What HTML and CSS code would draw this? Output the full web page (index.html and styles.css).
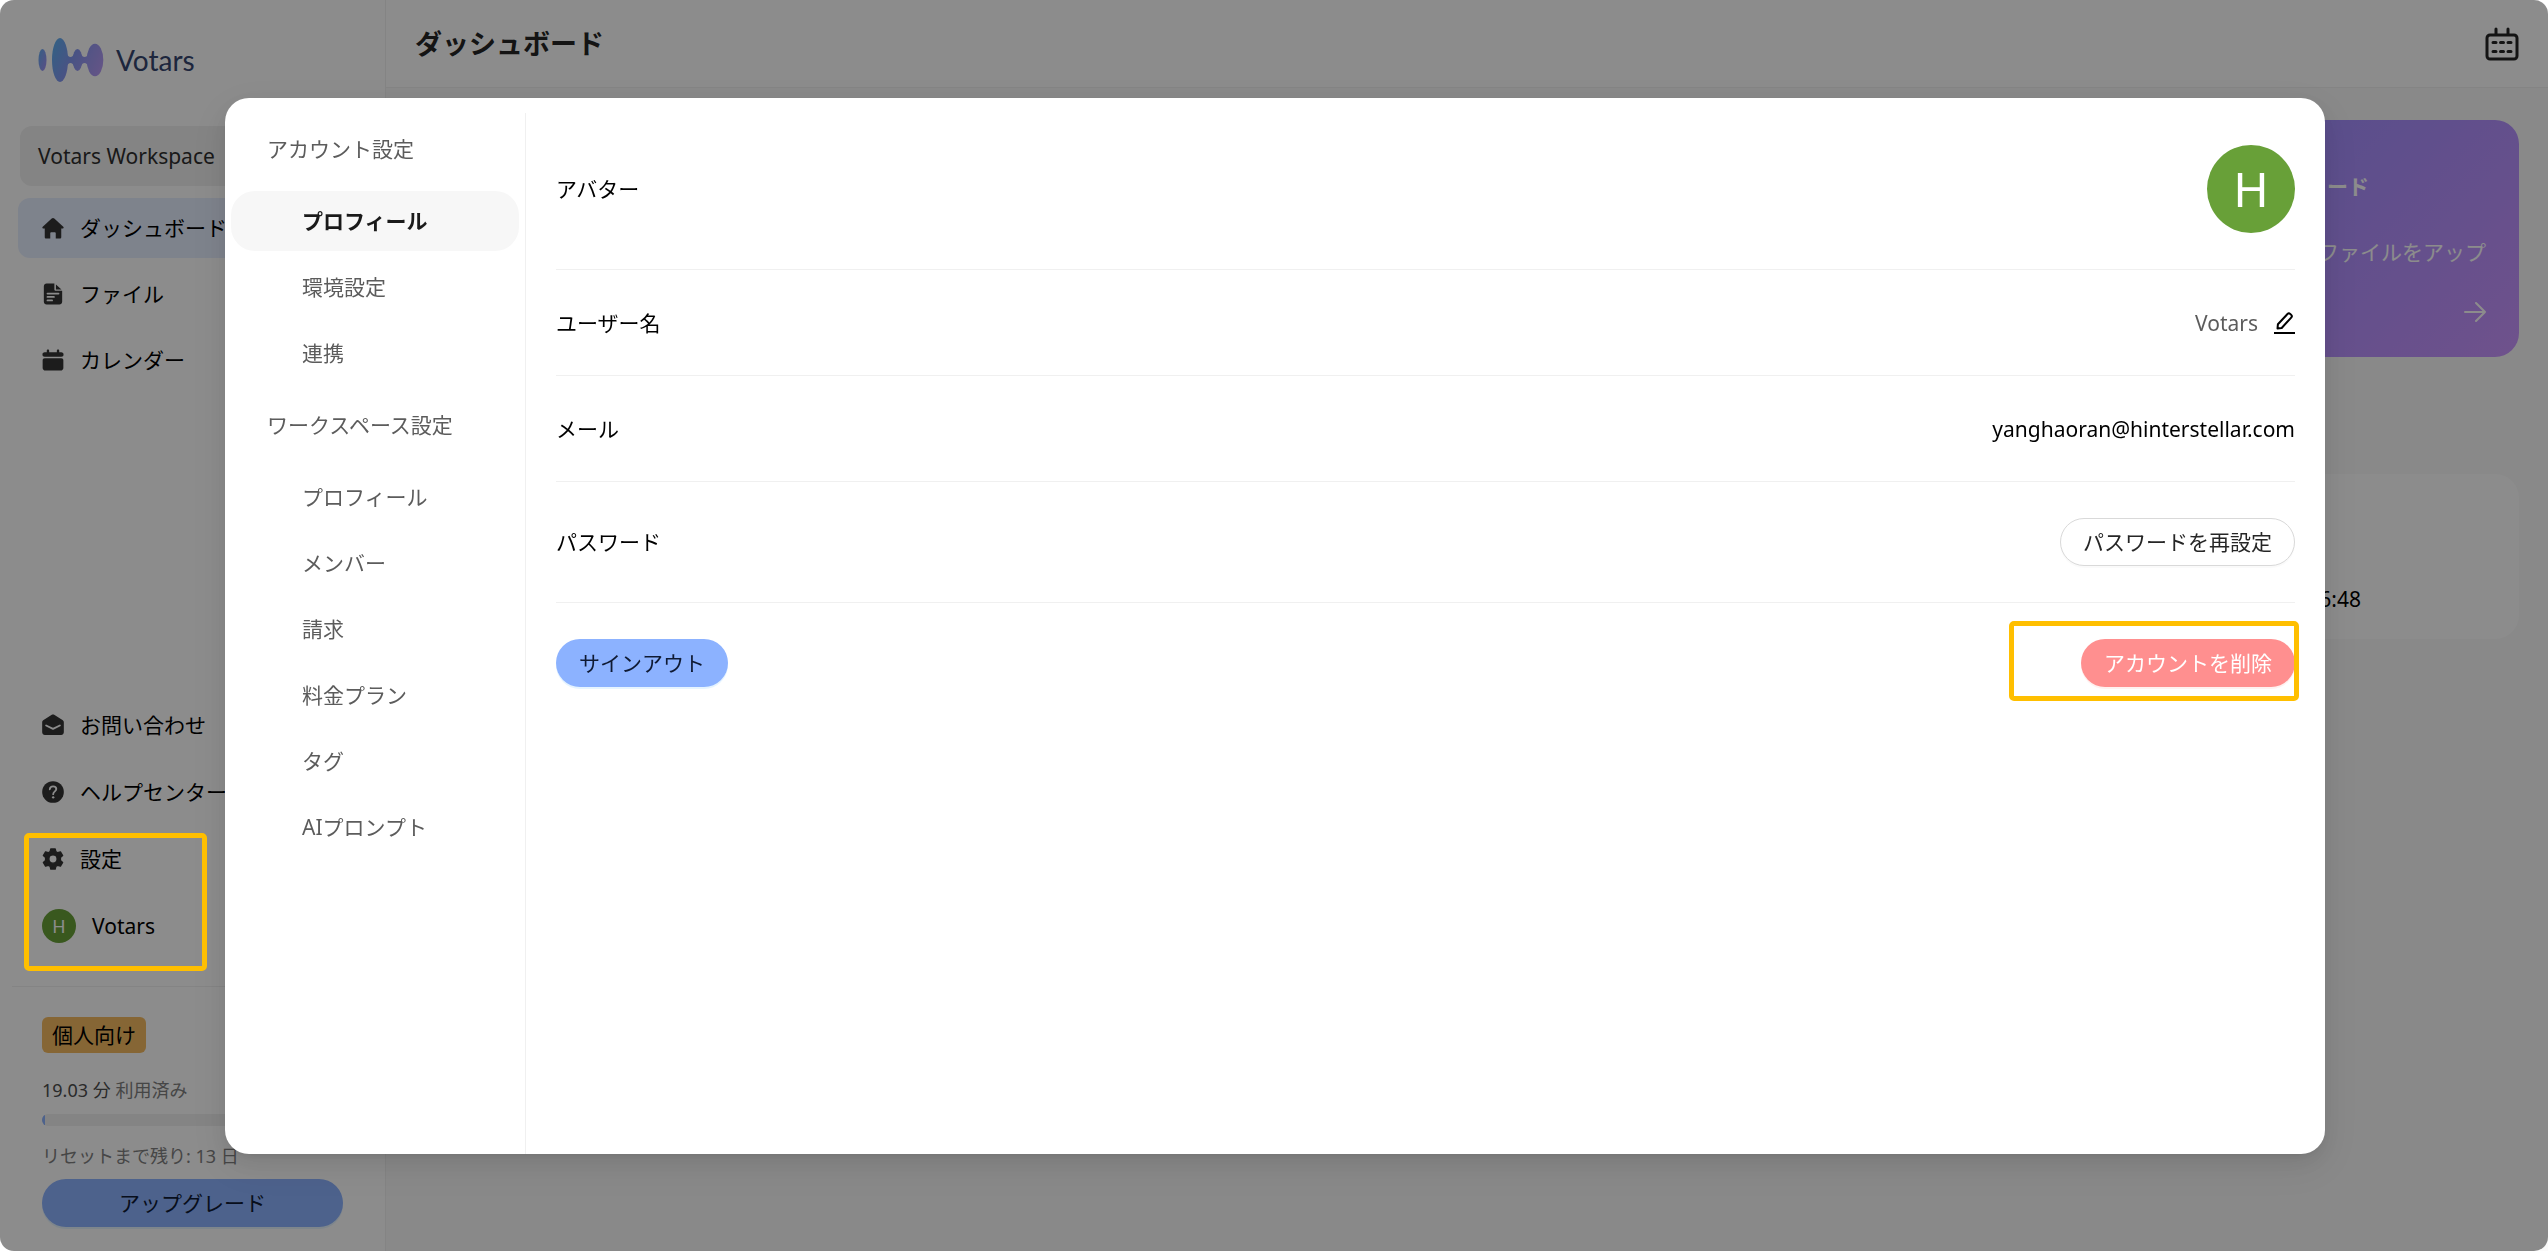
FILE: index.html
```html
<!DOCTYPE html>
<html lang="ja">
<head>
  <meta charset="utf-8">
  <meta name="viewport" content="width=device-width, initial-scale=1">
  <title>Votars</title>
  <link rel="stylesheet" href="styles.css">
</head>
<body>
  <div class="app">
    <aside class="sidebar">
      <a href="#" class="logo">
        <svg width="66" height="44" viewBox="0 0 66 44">
          <defs>
            <linearGradient id="logoMain" gradientUnits="userSpaceOnUse" x1="14" y1="10" x2="66" y2="34">
              <stop offset="0" stop-color="#61aef0"/>
              <stop offset="0.4" stop-color="#8597f0"/>
              <stop offset="1" stop-color="#ba9bf5"/>
            </linearGradient>
            <linearGradient id="logoSmall" x1="0" y1="0" x2="1" y2="1">
              <stop offset="0" stop-color="#61aef0"/>
              <stop offset="1" stop-color="#a68ef5"/>
            </linearGradient>
          </defs>
          <ellipse cx="4.5" cy="22" rx="4" ry="11" fill="url(#logoSmall)"/>
          <g fill="url(#logoMain)">
            <ellipse cx="22" cy="22" rx="8" ry="22"/>
            <ellipse cx="39.5" cy="22" rx="4.8" ry="11"/>
            <ellipse cx="57" cy="22" rx="8.3" ry="16.3"/>
            <path d="M28 14c1.500 4 3 5 4.500 5s2.500-1 3.500-3v12c-1-2-2-3-3.500-3s-3 1-4.500 5zM43 16c1 2 2 3 3.500 3s3-1 4.500-4v14c-1.500-3-3-4-4.500-4s-2.500 1-3.500 3z"/>
          </g>
        </svg>
        <span class="logo-text">Votars</span>
      </a>

      <button class="workspace">Votars Workspace</button>

      <nav class="nav">
        <a href="#" class="nav-item active">
          <svg class="icon" viewBox="0 0 24 24"><path d="M12 1c.5 0 1 .2 1.400.6l9.800 9c.9.800.4 2-.8 2H21V22c0 1-.6 1.500-1.500 1.500H15v-6c0-.6-.4-1-1-1h-4c-.6 0-1 .4-1 1v6H4.500C3.600 23.500 3 23 3 22v-9.400H1.600c-1.200 0-1.700-1.200-.8-2l9.800-9c.4-.4.900-.6 1.400-.6z"/></svg>
          ダッシュボード
        </a>
        <a href="#" class="nav-item">
          <svg class="icon" viewBox="0 0 24 24"><path d="M5 .5h8.500V7c0 .8.600 1.500 1.500 1.500h7v12c0 1.700-1.300 3-3 3H5c-1.700 0-3-1.300-3-3v-17c0-1.700 1.300-3 3-3z"/><path d="M15.200 1.500L21.200 7h-6z"/><path class="cut" d="M6 11.500h12M6 15.200h7M6 19h5"/></svg>
          ファイル
        </a>
        <a href="#" class="nav-item">
          <svg class="icon" viewBox="0 0 24 24"><path d="M6.500.5c.8 0 1.300.5 1.300 1.300V3.500h8.400V1.800c0-.8.500-1.300 1.300-1.300s1.300.5 1.300 1.300v1.700h2.200c1.700 0 2.500 1 2.500 2.500s-.8 2.500-2.500 2.500H3C1.300 8.500.5 7.500.5 6S1.300 3.500 3 3.500h2.200V1.800c0-.8.500-1.300 1.300-1.300zM3 10h18c1.500 0 2.300.8 2.300 2.300v8.400c0 1.700-1.300 2.800-3 2.800H3.700c-1.700 0-3-1.100-3-2.800v-8.400C.7 10.800 1.500 10 3 10z"/></svg>
          カレンダー
        </a>
      </nav>

      <nav class="nav nav-bottom">
        <a href="#" class="nav-item">
          <svg class="icon" viewBox="0 0 24 24"><path d="M12 .5c.5 0 .9.1 1.300.4l9 5.600c.9.600 1.500 1.500 1.500 2.500V20c0 1.700-1.300 3-3 3H3.200c-1.700 0-3-1.300-3-3V9c0-1 .6-1.900 1.500-2.500l9-5.600c.4-.3.800-.4 1.300-.4z"/><path class="cut" d="M4.500 12.500L12 16.300l7.500-3.800"/></svg>
          お問い合わせ
        </a>
        <a href="#" class="nav-item">
          <svg class="icon" viewBox="0 0 24 24"><circle cx="12" cy="12" r="11.800"/><path class="cut" d="M8.500 9c.2-2 1.600-3.200 3.600-3.200s3.500 1.300 3.500 3c0 2.500-3.400 2.600-3.400 5.600"/><circle class="cut-dot" cx="12.200" cy="17.800" r="1.300"/></svg>
          ヘルプセンター
        </a>
        <div class="nav-group">
          <a href="#" class="nav-item">
            <svg class="icon" viewBox="0 0 24 24"><path stroke="#333333" stroke-width="1.500" stroke-linejoin="round" fill-rule="evenodd" d="M9.600 1h4.800l.7 3 2 1.200 3-1 2.400 4-2.400 2.100v3.400l2.400 2.100-2.400 4-3-1-2 1.200-.7 3H9.600l-.7-3-2-1.200-3 1-2.400-4 2.400-2.100v-3.400L1.500 8.200l2.400-4 3 1 2-1.200zM12 7.500a4.500 4.500 0 1 0 0 9 4.500 4.500 0 0 0 0-9z"/></svg>
            設定
          </a>
          <a href="#" class="nav-item">
            <span class="avatar avatar-small">H</span>
            Votars
          </a>
          <div class="highlight highlight-settings"></div>
        </div>
      </nav>

      <div class="plan">
        <span class="plan-badge">個人向け</span>
        <div class="plan-text"><span class="plan-used">19.03 分</span> 利用済み</div>
        <div class="progress"><div class="progress-bar" style="width: 1%"></div></div>
        <div class="plan-text">リセットまで残り: 13 日</div>
        <button class="button button-primary button-block">アップグレード</button>
      </div>
    </aside>

    <div class="main">
      <header class="header">
        <h1 class="page-title">ダッシュボード</h1>
        <button class="icon-button" aria-label="カレンダー">
          <svg width="34" height="34" viewBox="0 0 34 34" fill="none" stroke="#262626" stroke-width="3" stroke-linecap="round">
            <rect x="2" y="8" width="30" height="24" rx="3"/>
            <path d="M11 2v5M23 2v5M8 15.500h3M15.500 15.500h3M23 15.500h3M8 24.500h3M15.500 24.500h3M23 24.500h3"/>
          </svg>
        </button>
      </header>
      <div class="content">
        <a href="#" class="upload-card">
          <strong>ロード</strong>
          <span class="upload-desc">ファイルをアップ</span>
          <svg width="22" height="22" viewBox="0 0 22 22" fill="none" stroke="currentColor" stroke-width="2" stroke-linecap="round" stroke-linejoin="round"><path d="M1 11h20M12 2l9 9-9 9"/></svg>
        </a>
        <div class="record">
          <span>16:48</span>
        </div>
      </div>
    </div>
  </div>

  <div class="overlay">
    <div class="modal" role="dialog" aria-modal="true">
      <nav class="modal-nav">
        <h2 class="modal-heading">アカウント設定</h2>
        <a href="#" class="modal-item active">プロフィール</a>
        <a href="#" class="modal-item">環境設定</a>
        <a href="#" class="modal-item">連携</a>
        <h2 class="modal-heading">ワークスペース設定</h2>
        <a href="#" class="modal-item">プロフィール</a>
        <a href="#" class="modal-item">メンバー</a>
        <a href="#" class="modal-item">請求</a>
        <a href="#" class="modal-item">料金プラン</a>
        <a href="#" class="modal-item">タグ</a>
        <a href="#" class="modal-item">AIプロンプト</a>
      </nav>

      <section class="modal-content">
        <div class="row">
          <span>アバター</span>
          <span class="avatar avatar-large">H</span>
        </div>
        <div class="row">
          <span>ユーザー名</span>
          <div class="username">
            Votars
            <button class="icon-button" aria-label="編集">
              <svg width="21" height="22" viewBox="0 0 21 22" fill="none" stroke="#000" stroke-width="2" stroke-linejoin="round"><path d="M3.500 16.500l.4-4.200L13.500 2c.8-.8 1.900-.8 2.700-.1l1 1c.8.8.8 1.900 0 2.700L7.700 16zM0 21h21"/></svg>
            </button>
          </div>
        </div>
        <div class="row">
          <span>メール</span>
          <span>yanghaoran@hinterstellar.com</span>
        </div>
        <div class="row">
          <span>パスワード</span>
          <button class="button button-outline">パスワードを再設定</button>
        </div>
        <div class="row">
          <button class="button button-primary">サインアウト</button>
          <div class="delete-wrap">
            <button class="button button-danger">アカウントを削除</button>
            <div class="highlight highlight-delete"></div>
          </div>
        </div>
      </section>
    </div>
  </div>
</body>
</html>
```
FILE: styles.css
```css
:root {
  --foreground: #000000;
  --muted-foreground: #5c5c5c;
  --primary: #8cb2ff;
  --danger: #ff8f8f;
  --avatar: #68a038;
  --border: #f0f0f0;
  --highlight: #ffbf00;
}

* {
  box-sizing: border-box;
}

body {
  margin: 0;
  font-family: "Noto Sans", "Noto Sans CJK JP", sans-serif;
  font-size: 21px;
  line-height: 28px;
  color: var(--foreground);
  background: #ffffff;
}

a {
  color: inherit;
  text-decoration: none;
}

button {
  font: inherit;
  cursor: pointer;
}

.app {
  display: flex;
  min-height: 100vh;
}

/* Sidebar */
.sidebar {
  display: flex;
  flex-direction: column;
  width: 386px;
  flex-shrink: 0;
  padding: 38px 18px 24px;
  border-right: 1px solid var(--border);
}

.logo {
  display: flex;
  align-items: center;
  gap: 12px;
  margin: 0 20px 44px;
}

.logo-text {
  font-family: Lato, sans-serif;
  font-size: 28px;
  color: #354570;
}

.workspace {
  height: 60px;
  margin: 0 2px 12px;
  padding: 0 18px;
  border: 0;
  border-radius: 12px;
  background: #f0f0f0;
  color: #2f2f2f;
  text-align: left;
}

.nav {
  display: flex;
  flex-direction: column;
  gap: 6px;
}

.nav-bottom {
  margin-top: auto;
  gap: 7px;
}

.nav-group {
  position: relative;
  display: flex;
  flex-direction: column;
  gap: 7px;
}

.nav-item {
  display: flex;
  align-items: center;
  gap: 16px;
  height: 60px;
  padding: 0 24px;
  border-radius: 12px;
  white-space: nowrap;
}

.nav-item.active {
  background: #e6eeff;
}

.icon {
  width: 22px;
  height: 22px;
  fill: #333333;
}

.cut {
  fill: none;
  stroke: #ffffff;
  stroke-width: 2;
  stroke-linecap: round;
  stroke-linejoin: round;
}

.cut-dot {
  fill: #ffffff;
}

.avatar {
  display: flex;
  align-items: center;
  justify-content: center;
  border-radius: 50%;
  background: var(--avatar);
  color: #ffffff;
}

.avatar-small {
  width: 34px;
  height: 34px;
  font-size: 18px;
}

.avatar-large {
  width: 88px;
  height: 88px;
  font-size: 48px;
}

.plan {
  display: flex;
  flex-direction: column;
  align-items: flex-start;
  margin: 30px -6px 0;
  padding: 30px 30px 0;
  border-top: 1px solid var(--border);
}

.plan-badge {
  height: 36px;
  line-height: 36px;
  margin-bottom: 23px;
  padding: 0 10px;
  border-radius: 6px;
  background: #f5bb62;
}

.plan-text {
  font-size: 18px;
  color: #808080;
}

.plan-used {
  color: #4d4d4d;
}

.progress {
  width: 100%;
  height: 12px;
  margin: 10px 0 16px;
  border-radius: 6px;
  background: var(--border);
  overflow: hidden;
}

.progress-bar {
  height: 100%;
  background: var(--primary);
}

.button {
  height: 48px;
  padding: 0 22px;
  border: 1px solid transparent;
  border-radius: 24px;
  white-space: nowrap;
}

.button-primary {
  background: var(--primary);
  color: #0f1a33;
  box-shadow: 0 2px 0 rgba(5, 145, 255, 0.1);
}

.button-outline {
  border-color: #d9d9d9;
  background: #ffffff;
  color: #262626;
  box-shadow: 0 2px 0 rgba(0, 0, 0, 0.02);
}

.button-danger {
  background: var(--danger);
  color: #ffffff;
  box-shadow: 0 2px 0 rgba(255, 38, 5, 0.06);
}

.button-block {
  width: 100%;
  margin-top: 9px;
}

.icon-button {
  display: flex;
  padding: 0;
  border: 0;
  background: none;
}

/* Dashboard */
.main {
  flex: 1;
  min-width: 0;
  background: #fafafa;
}

.header {
  display: flex;
  align-items: center;
  justify-content: space-between;
  height: 88px;
  padding: 0 29px;
  border-bottom: 1px solid var(--border);
  background: #ffffff;
}

.page-title {
  margin: 0;
  font-size: 27px;
  color: #262626;
}

.content {
  display: flex;
  flex-direction: column;
  gap: 117px;
  padding: 32px 29px;
}

.upload-card {
  display: flex;
  flex-direction: column;
  align-self: flex-end;
  width: 246px;
  height: 237px;
  padding: 52px 33px 34px;
  border-radius: 24px;
  background: linear-gradient(135deg, #a08eff, #ca95ff);
  color: #ffffff;
}

.upload-desc {
  margin: 38px 0 35px;
  text-align: right;
  white-space: nowrap;
}

.upload-card svg {
  align-self: flex-end;
}

.record {
  display: flex;
  align-items: center;
  justify-content: flex-end;
  height: 165px;
  padding: 84px 158px 0 0;
  border-radius: 24px;
  background: #ffffff;
}

/* Settings dialog */
.overlay {
  position: fixed;
  inset: 0;
  z-index: 10;
  display: flex;
  padding: 98px 223px 97px 225px;
  border-radius: 14px;
  background: rgba(0, 0, 0, 0.45);
}

.modal {
  display: flex;
  flex: 1;
  min-width: 0;
  border-radius: 24px;
  background: #ffffff;
  box-shadow: 0 8px 21px rgba(0, 0, 0, 0.08), 0 4px 8px -5px rgba(0, 0, 0, 0.12), 0 12px 37px 11px rgba(0, 0, 0, 0.05);
}

.modal-nav {
  width: 301px;
  flex-shrink: 0;
  margin-top: 15px;
  padding: 22px 6px 0;
  border-right: 1px solid var(--border);
  color: var(--muted-foreground);
}

.modal-heading {
  margin: 0 36px 28px;
  font-size: 21px;
  font-weight: 400;
}

.modal-item {
  display: flex;
  align-items: center;
  height: 60px;
  margin-bottom: 6px;
  padding: 0 71px;
  border-radius: 24px;
  white-space: nowrap;
}

.modal-item.active {
  background: #f7f7f7;
  color: #1a1a1a;
  font-weight: 700;
}

.modal-item + .modal-heading {
  margin-top: 28px;
}

.modal-content {
  flex: 1;
  min-width: 0;
  padding: 11px 30px 0;
}

.row {
  display: flex;
  align-items: center;
  justify-content: space-between;
  min-height: 106px;
  padding: 36px 0;
  border-bottom: 1px solid var(--border);
}

.row:last-child {
  border-bottom: 0;
}

.username {
  display: flex;
  align-items: center;
  gap: 16px;
  color: var(--muted-foreground);
}

.delete-wrap {
  position: relative;
}

/* Frames drawn over the controls to point at */
.highlight {
  position: absolute;
  z-index: 20;
  border: 5px solid var(--highlight);
  border-radius: 5px;
  pointer-events: none;
}

.highlight-settings {
  top: 4px;
  left: 6px;
  width: 183px;
  height: 138px;
}

.highlight-delete {
  top: -18px;
  right: -4px;
  width: 290px;
  height: 80px;
}
```
